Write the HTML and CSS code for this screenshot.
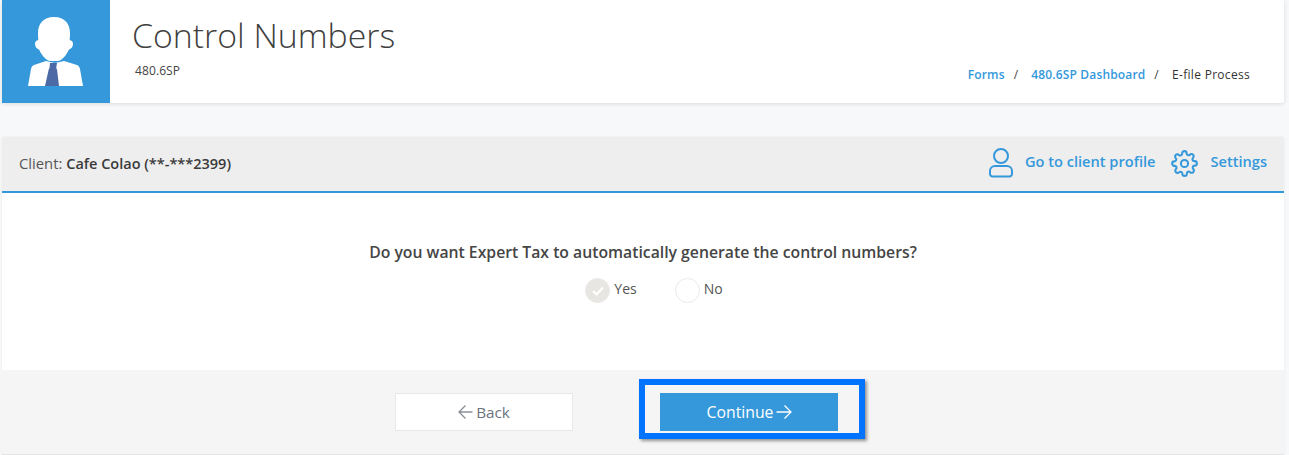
FILE: index.html
```html
<!DOCTYPE html>
<html lang="en">
<head>
<meta charset="utf-8">
<title>Control Numbers</title>
<link rel="stylesheet" href="styles.css">
</head>
<body>
<div class="page">
  <header class="top">
    <div class="avatar">
      <svg width="56" height="69" viewBox="0 0 56 69">
        <path class="skin" transform="translate(-2 0)" d="M28 0c-11 0-16 7-16 16 0 4 .3 6 .3 7-1.800 .3-3.300 1.500-3.300 4 0 3 2 5 4 5.500 2 5 6 9 9 11 1 .7 11 .7 12 0 3-2 7-6 9-11 2-.5 4-2.500 4-5.500 0-2.500-1.500-3.700-3.300-4 0-1 .3-3 .3-7C44 7 39 0 28 0z"/>
        <path class="skin" d="M18 44 6 48c-2 1-2.500 2-3 4L0 69h55l-3-17c-.5-2-1-3-3-4l-13-4-9 2z"/>
        <path class="tie" d="M22 46h7l-.8 5 .8 1.500L31 69H17l3.700-16.500.8-1.500z"/>
      </svg>
    </div>
    <div class="titles">
      <h1>Control Numbers</h1>
      <p>480.6SP</p>
    </div>
    <nav class="crumbs">
      <a>Forms</a><span class="sep">/</span><a>480.6SP Dashboard</a><span class="sep">/</span><span class="current">E-file Process</span>
    </nav>
  </header>

  <section class="card">
    <div class="card-head">
      <div class="client">Client: <strong>Cafe Colao (**-***2399)</strong></div>
      <div class="actions">
        <a class="action">
          <svg width="24" height="30" viewBox="0 0 24 30" fill="none" stroke="#3498db" stroke-width="2">
            <circle cx="12" cy="8" r="7"/>
            <path d="M6 18h12a5 5 0 0 1 5 5v3a2.500 2.500 0 0 1-2.500 2.500h-17A2.500 2.500 0 0 1 1 26v-3a5 5 0 0 1 5-5z"/>
          </svg>
          <span>Go to client profile</span>
        </a>
        <a class="action">
          <svg width="27" height="27" viewBox="0 0 24 24" fill="none" stroke="#3498db" stroke-width="1.800" stroke-linejoin="round">
            <circle cx="12" cy="12" r="3.200"/>
            <path d="M19.400 15a1.650 1.650 0 0 0 .33 1.820l.06.06a2 2 0 1 1-2.830 2.830l-.06-.06a1.650 1.650 0 0 0-2.800 1.170V21a2 2 0 0 1-4 0v-.09a1.650 1.650 0 0 0-2.800-1.170l-.06.06a2 2 0 1 1-2.830-2.830l.06-.06a1.650 1.650 0 0 0-1.170-2.800H3a2 2 0 0 1 0-4h.09a1.650 1.650 0 0 0 1.170-2.800l-.06-.06a2 2 0 1 1 2.830-2.830l.06.06a1.650 1.650 0 0 0 2.800-1.170V3a2 2 0 0 1 4 0v.09a1.650 1.650 0 0 0 2.800 1.170l.06-.06a2 2 0 1 1 2.830 2.830l-.06.06a1.650 1.650 0 0 0 1.170 2.800H21a2 2 0 0 1 0 4h-.09a1.650 1.650 0 0 0-1.510 1z"/>
          </svg>
          <span>Settings</span>
        </a>
      </div>
    </div>
    <div class="card-body">
      <p class="question">Do you want Expert Tax to automatically generate the control numbers?</p>
      <div class="options">
        <label class="option">
          <span class="radio checked">
            <svg width="14" height="12" viewBox="0 0 14 12" fill="none" stroke="#fff" stroke-width="2.200"><path d="M2 6l3.500 3.500L12 2.500"/></svg>
          </span>Yes
        </label>
        <label class="option">
          <span class="radio"></span>No
        </label>
      </div>
    </div>
    <div class="card-foot">
      <button class="btn back"><span class="arrow-back">
        <svg width="15" height="14" viewBox="0 0 15 14" fill="none" stroke="#8a8f96" stroke-width="1.300"><path d="M14.500 7H1M7.500 .5 1 7l6.500 6.500"/></svg>
      </span>Back</button>
      <div class="highlight">
        <button class="btn continue">Continue<svg width="16" height="14" viewBox="0 0 16 14" fill="none" stroke="#fff" stroke-width="1.300"><path d="M.5 7H15M8.500 .5 15 7l-6.500 6.500"/></svg></button>
      </div>
    </div>
  </section>
</div>
</body>
</html>
```
FILE: styles.css
```css
* { box-sizing: border-box; }
html, body { margin: 0; height: 100%; }
body {
  background: #f7f8fa;
  font-family: "Open Sans", sans-serif;
  color: #3a3a3a;
  overflow: hidden;
}
.page {
  width: 1289px;
  padding: 0 5px 0 2px;
}
.top {
  height: 103px;
  display: flex;
  background: #fff;
  border-radius: 0 0 3px 3px;
  box-shadow: 0 1px 4px rgba(0, 0, 0, .12);
}
.avatar {
  width: 108px;
  background: #3498db;
  display: flex;
  justify-content: center;
  align-items: flex-start;
  padding-top: 17px;
}
.skin { fill: #fff; }
.tie { fill: #4c6aa6; }
.titles { padding: 13px 0 0 22px; flex: 1; }
h1 {
  margin: 0;
  font-size: 33.800px;
  line-height: 45px;
  font-weight: 300;
  color: #3f3f3f;
}
.titles p {
  margin: 5px 0 0 3px;
  font-size: 12px;
  line-height: 15px;
  letter-spacing: .1px;
  color: #444;
}
.crumbs {
  display: flex;
  align-self: flex-start;
  margin-top: 67px;
  padding-right: 34px;
  font-size: 12px;
  line-height: 15px;
  font-weight: 400;
  letter-spacing: .3px;
}
.crumbs a { color: #3498db; font-weight: 600; letter-spacing: .15px; }
.sep { margin: 0 13px 0 9px; color: #444; }
.current { color: #333; }
.card {
  margin-top: 34px;
  height: 318px;
  display: flex;
  flex-direction: column;
  background: #fff;
  border-radius: 3px 3px 0 0;
  box-shadow: 0 0 2px rgba(0, 0, 0, .1);
}
.card-head {
  height: 56px;
  flex: none;
  display: flex;
  align-items: center;
  justify-content: space-between;
  padding: 0 17px 2px;
  background: #eeeeee;
  border-bottom: 2px solid #3498db;
  font-size: 14.800px;
  color: #555;
}
.client { padding-bottom: 1px; }
.client strong { font-weight: 600; font-size: 14.500px; color: #3a3a3a; }
.actions { display: flex; gap: 16px; }
.action {
  display: flex;
  align-items: center;
  gap: 12px;
  color: #3498db;
  font-weight: 600;
  font-size: 14.600px;
}
.action span { padding-bottom: 5px; }
.card-body {
  flex: 1;
  padding-top: 49px;
  text-align: center;
}
.question {
  margin: 0;
  font-size: 15.750px;
  line-height: 21px;
  font-weight: 600;
  color: #454545;
}
.options {
  display: flex;
  justify-content: center;
  gap: 38px;
  margin-top: 15px;
  padding-left: 22px;
  color: #555;
  font-size: 14px;
}
.option { display: flex; align-items: flex-start; gap: 4px; line-height: 21px; }
.radio {
  width: 25px;
  height: 25px;
  border-radius: 50%;
  border: 1px solid #ebe9e6;
  background: #fff;
  display: flex;
  align-items: center;
  justify-content: center;
}
.radio.checked { background: #e8e6e3; }
.card-foot {
  height: 85px;
  flex: none;
  display: flex;
  align-items: flex-start;
  justify-content: center;
  gap: 66px;
  background: #f5f5f5;
  border-bottom: 1px solid #e5e5e5;
  padding-right: 26px;
}
.btn {
  font-family: inherit;
  font-size: 16px;
  height: 38px;
  width: 178px;
  display: flex;
  align-items: center;
  justify-content: center;
  cursor: pointer;
  border-radius: 0;
}
.back {
  margin-top: 23px;
  background: #fff;
  border: 1px solid #e8e8e8;
  color: #6b7480;
  gap: 3px;
  font-size: 15.300px;
}
.arrow-back { display: flex; }
.highlight {
  margin-top: 9px;
  border: 6px solid #0073ff;
  padding: 8px 21px 8px 15px;
  box-shadow: 2px 2px 3px rgba(0, 0, 0, .4);
  height: 60px;
}
.continue {
  background: #3498db;
  border: 0;
  color: #fff;
  gap: 2px;
  font-size: 15.800px;
}
```
